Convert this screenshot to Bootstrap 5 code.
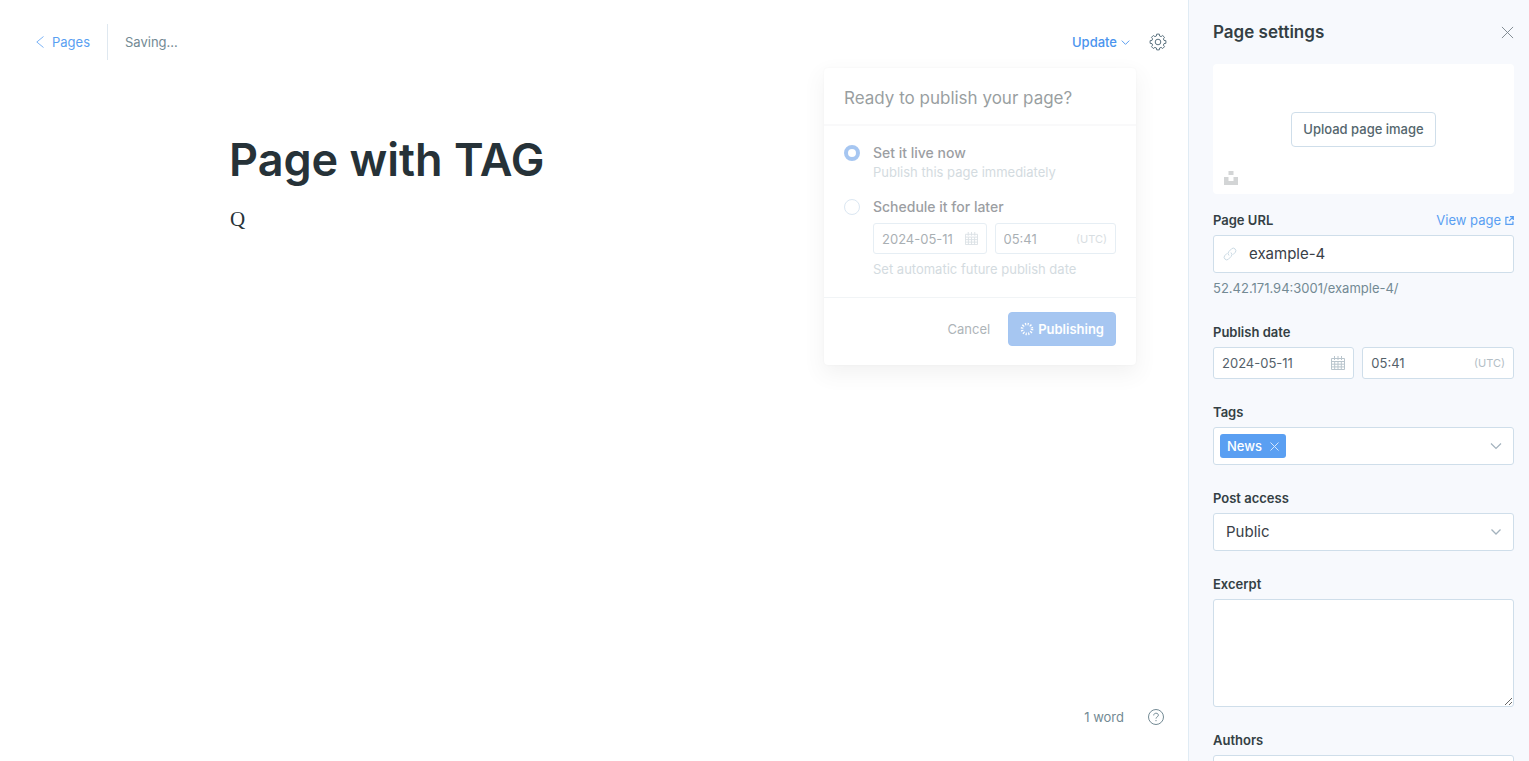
<!DOCTYPE html>
<html lang="en">
<head>
<meta charset="utf-8">
<meta name="viewport" content="width=device-width, initial-scale=1">
<title>Page with TAG</title>
<link href="https://cdn.jsdelivr.net/npm/bootstrap@5.3.0/dist/css/bootstrap.min.css" rel="stylesheet">
<style>
  :root { --ink: #394047; --line: #cfdeea; --link: #5a9ff2; --muted: #738a94; --soft: #a9b8c2; }
  body { font-family: Inter, "Open Sans", sans-serif; font-size: 13px; line-height: 20px; color: var(--ink); overflow: hidden; }
  svg { display: block; flex: none; }
  a { color: var(--link); text-decoration: none; }
  .bare { border: 0; background: none; padding: 0; color: inherit; }

  .topbar { padding: 24px 21px 0 36px; height: 60px; }
  .topbar .split { width: 1px; height: 36px; background: #dfe8f0; margin: 0 17px; }
  .status { color: var(--muted); }
  .update { color: #4a94ee; padding: 0 6px; font-weight: 500; }
  .gear { margin-left: 13px; }

  .canvas { width: 100%; max-width: 730px; padding-top: 68px; }
  .page-name { font-size: 45px; line-height: 64px; font-weight: 600; color: #263238; margin: 0; }
  .page-text { font-family: "Liberation Serif", serif; font-size: 21px; line-height: 30px; color: #263238; margin: 12px 0 0; padding-left: 1px; }
  .bottom { padding: 0 24px 34px; color: var(--muted); }

  /* publish menu, faded while the page is being saved */
  .publish { position: absolute; top: 36px; right: 0; width: 312px; background: #fff; border-radius: 4px; opacity: .5; box-shadow: 0 0 2px rgba(0,0,0,.08), 0 8px 20px rgba(0,0,0,.1); z-index: 2; }
  .publish header { padding: 18px 20px 14px; border-bottom: 2px solid #f4f5f7; font-size: 17px; line-height: 24px; color: #343f44; }
  .publish section { padding: 17px 20px 19px; }
  .publish footer { padding: 14px 20px 19px; border-top: 1px solid #e5eaee; }
  .choice { display: grid; grid-template-columns: 16px minmax(0, 1fr); column-gap: 13px; align-items: center; }
  .choice > div, .choice > small { grid-column: 2; }
  .choice > div { margin: 6px 0; }
  .choice small { font-size: 13px; line-height: 18px; color: var(--soft); }
  .choice label { font-size: 14px; font-weight: 500; line-height: 20px; color: #394047; }
  .choice input[type=radio] { appearance: none; width: 16px; height: 16px; margin: 0; border: 1px solid #b9d0e6; border-radius: 50%; background: #fff; }
  .choice input[type=radio]:checked { border: 4px solid #508fe5; }
  .cancel { color: #5d6b73; margin-right: 18px; }
  .go { background: #508fe5; color: #fff; border: 1px solid #4a8ce6; border-radius: 4px; height: 34px; padding: 0 11px; font-weight: 600; }

  .settings { width: 341px; height: 100vh; overflow: hidden; background: #f7f9fd; border-left: 1px solid #e0ebf4; padding: 20px 15px 0 24px; }
  .settings h2 { font-size: 17px; line-height: 24px; font-weight: 600; margin: 0; color: #343f44; }
  .cover { height: 130px; background: #fff; border-radius: 4px; margin: 20px 0 18px; display: grid; grid-template-rows: 1fr auto 1fr; padding: 9px 11px; }
  .upload { height: 35px; background: #fff; border: 1px solid var(--line); border-radius: 4px; padding: 0 11px; color: #54666d; font-weight: 500; }
  .group { margin-bottom: 25px; }
  .group > label, .group .title { display: block; font-weight: 600; line-height: 16px; color: #343f44; }
  .group > label, .group .titles { margin-bottom: 7px; }
  .group .titles { height: 16px; }
  .hint { line-height: 20px; padding-top: 5px; color: var(--muted); margin-bottom: 26px; }
  .field { display: flex; align-items: center; background: #fff; border: 1px solid var(--line); border-radius: 3px; height: 32px; padding: 0 8px; min-width: 0; }
  .field input { border: 0; outline: 0; padding: 0; flex: 1 1 0; min-width: 0; background: none; color: #54616a; }
  .field span { font-size: 11px; color: #b3bec6; }
  .field.date { flex: 12 1 0; }
  .field.time { flex: 13 1 0; }
  .field.tall { height: 38px; padding: 0 9px; }
  .field.tall input { font-size: 15px; color: #394047; margin-left: 12px; }
  .tagbox { height: 38px; padding: 0 11px 0 6px; }
  .chip { background: #5a9ff2; color: #fff; border: 0; border-radius: 3px; height: 24px; padding: 0 7px; font-weight: 500; }
  .access { height: 38px; font-size: 15px; line-height: 24px; padding: 0 36px 0 12px; border: 1px solid var(--line); border-radius: 3px; color: #394047;
    background-image: url("data:image/svg+xml,%3Csvg xmlns='http://www.w3.org/2000/svg' viewBox='0 0 12 12'%3E%3Cpath d='M1.5 3.5L6 8l4.500-4.500' fill='none' stroke='%23a3b2bd' stroke-width='1.300'/%3E%3C/svg%3E"); background-size: 12px 12px; background-position: right 11px center; }
  .excerpt { height: 108px; border: 1px solid var(--line); border-radius: 3px; display: block; }
  .publish .field { height: 31px; }
</style>
</head>
<body>
<svg width="0" height="0" class="position-absolute" aria-hidden="true">
  <symbol id="cal" viewBox="0 0 14 14"><path d="M.5 2.500h13v11H.5zM.5 5.500h13M3.500 0v4M10.500 0v4M7 0v4M.5 8.200h13M.5 10.900h13M3.700 5.500v8M7 5.500v8M10.300 5.500v8" fill="none" stroke="currentColor"/></symbol>
  <symbol id="down" viewBox="0 0 12 12"><path d="M1 3.500L6 8.500l5-5" fill="none" stroke="currentColor" stroke-width="1.200"/></symbol>
  <symbol id="cross" viewBox="0 0 14 14"><path d="M1 1l12 12M13 1L1 13" fill="none" stroke="currentColor"/></symbol>
</svg>
<div class="d-flex vh-100">
  <main class="flex-grow-1 d-flex flex-column">
    <div class="topbar d-flex align-items-center">
      <a href="#" class="d-flex align-items-center gap-2"><svg width="8" height="12" viewBox="0 0 8 12"><path d="M7.500.5L.8 6l6.700 5.500" fill="none" stroke="currentColor" stroke-width=".8"/></svg>Pages</a>
      <div class="split"></div>
      <div class="status">Saving...</div>
      <div class="ms-auto position-relative">
        <button type="button" class="bare update d-flex align-items-center gap-1">Update
          <svg width="9" height="9" viewBox="0 0 12 12"><use href="#down"/></svg></button>
        <form class="publish">
          <header>Ready to publish your page?</header>
          <section>
            <div class="choice mb-3">
              <input type="radio" name="when" id="now" checked><label for="now">Set it live now</label>
              <small>Publish this page immediately</small>
            </div>
            <div class="choice">
              <input type="radio" name="when" id="later"><label for="later">Schedule it for later</label>
              <div class="d-flex gap-2">
                <div class="field date"><input type="text" value="2024-05-11" aria-label="Schedule date"><svg width="13" height="13" color="#b9c5cd"><use href="#cal"/></svg></div>
                <div class="field time"><input type="text" value="05:41" aria-label="Schedule time"><span>(UTC)</span></div>
              </div>
              <small>Set automatic future publish date</small>
            </div>
          </section>
          <footer class="d-flex justify-content-end align-items-center">
            <button type="button" class="bare cancel">Cancel</button>
            <button type="button" class="go d-flex align-items-center gap-1"><svg width="14" height="14" viewBox="0 0 14 14"><circle cx="7" cy="7" r="5" fill="none" stroke="#fff" stroke-width="2.600" stroke-dasharray="1.200 1.418"/></svg>Publishing</button>
          </footer>
        </form>
      </div>
      <button type="button" class="bare gear" aria-label="Settings"><svg width="18" height="18" viewBox="0 0 18 18" fill="none" stroke="#5d7380" stroke-linejoin="round"><circle cx="9" cy="9" r="2.800"/><path d="M7.700 1.100h2.600L10.600 3 12.100 3.600 13.700 2.500 15.500 4.300 14.400 5.900 15 7.400l1.900.3v2.600L15 10.600l-.6 1.500 1.100 1.600-1.800 1.800-1.600-1.100-1.500.6-.3 1.900H7.700L7.400 15l-1.500-.6-1.600 1.100-1.800-1.800 1.100-1.600L3 10.600l-1.900-.3V7.700L3 7.400l.6-1.500L2.500 4.300l1.800-1.800 1.600 1.100L7.400 3z"/></svg></button>
    </div>
    <div class="canvas mx-auto">
      <h1 class="page-name">Page with TAG</h1>
      <p class="page-text">Q</p>
    </div>
    <div class="bottom mt-auto d-flex justify-content-end align-items-center gap-4">
      <span>1 word</span>
      <a href="#" aria-label="Help"><svg width="16" height="18" viewBox="0 0 16 18" fill="none" stroke="#738a94"><circle cx="8" cy="9" r="7.500"/><path d="M5.700 7.400c0-3 4.700-2.800 4.700-.2 0 1.700-2.400 1.600-2.400 3.400M8 12v1.200"/></svg></a>
    </div>
  </main>

  <aside class="settings flex-shrink-0">
    <div class="d-flex justify-content-between align-items-center">
      <h2>Page settings</h2>
      <button type="button" class="bare" aria-label="Close"><svg width="13" height="13" color="#7a858c"><use href="#cross"/></svg></button>
    </div>
    <div class="cover">
      <span></span>
      <div class="text-center"><button type="button" class="upload">Upload page image</button></div>
      <svg class="align-self-end" width="14" height="14" viewBox="0 0 14 14" fill="#d3d5d6"><path d="M4.500 0h5v4h-5zM0 6h4.500v4h5V6H14v8H0z"/></svg>
    </div>
    <div class="group mb-0">
      <div class="titles d-flex justify-content-between align-items-center">
        <label class="title" for="url">Page URL</label>
        <a href="#" class="d-flex align-items-center gap-1">View page <svg width="9" height="9" viewBox="0 0 10 10" fill="none" stroke="currentColor" stroke-width="1.400"><path d="M4 1.500H1v7.800h7.800V6M5.500.8h3.700v3.700M9 1L4.500 5.500"/></svg></a>
      </div>
      <div class="field tall">
        <svg width="14" height="14" viewBox="0 0 14 14" fill="none" stroke="#cbdae4" stroke-linecap="round"><path d="M5.800 8.200a2.600 2.600 0 0 1 0-3.600l3-3a2.600 2.600 0 0 1 3.600 3.600L10.200 7.400M8.200 5.800a2.600 2.600 0 0 1 0 3.600l-3 3a2.600 2.600 0 0 1-3.600-3.600L3.800 6.600"/></svg>
        <input type="text" id="url" value="example-4">
      </div>
      <p class="hint">52.42.171.94:3001/example-4/</p>
    </div>
    <div class="group">
      <label for="date">Publish date</label>
      <div class="d-flex gap-2">
        <div class="field date"><input type="text" id="date" value="2024-05-11"><svg width="14" height="14" color="#b9c5cd"><use href="#cal"/></svg></div>
        <div class="field time"><input type="text" value="05:41" aria-label="Publish time"><span>(UTC)</span></div>
      </div>
    </div>
    <div class="group">
      <div class="titles title">Tags</div>
      <div class="field tagbox justify-content-between">
        <button type="button" class="chip d-flex align-items-center gap-2" aria-label="Remove News">News <svg width="9" height="9" viewBox="0 0 9 9" color="#d4e6fc"><path d="M.5.5l8 8M8.500.5l-8 8" stroke="currentColor"/></svg></button>
        <svg width="12" height="12" color="#a3b2bd"><use href="#down"/></svg>
      </div>
    </div>
    <div class="group">
      <label for="access">Post access</label>
      <select id="access" class="form-select access"><option>Public</option></select>
    </div>
    <div class="group">
      <label for="excerpt">Excerpt</label>
      <textarea id="excerpt" class="form-control excerpt"></textarea>
    </div>
    <div class="group">
      <label for="authors">Authors</label>
      <div class="field tall"><input type="text" id="authors"></div>
    </div>
  </aside>
</div>
<script src="https://cdn.jsdelivr.net/npm/bootstrap@5.3.0/dist/js/bootstrap.bundle.min.js"></script>
</body>
</html>
